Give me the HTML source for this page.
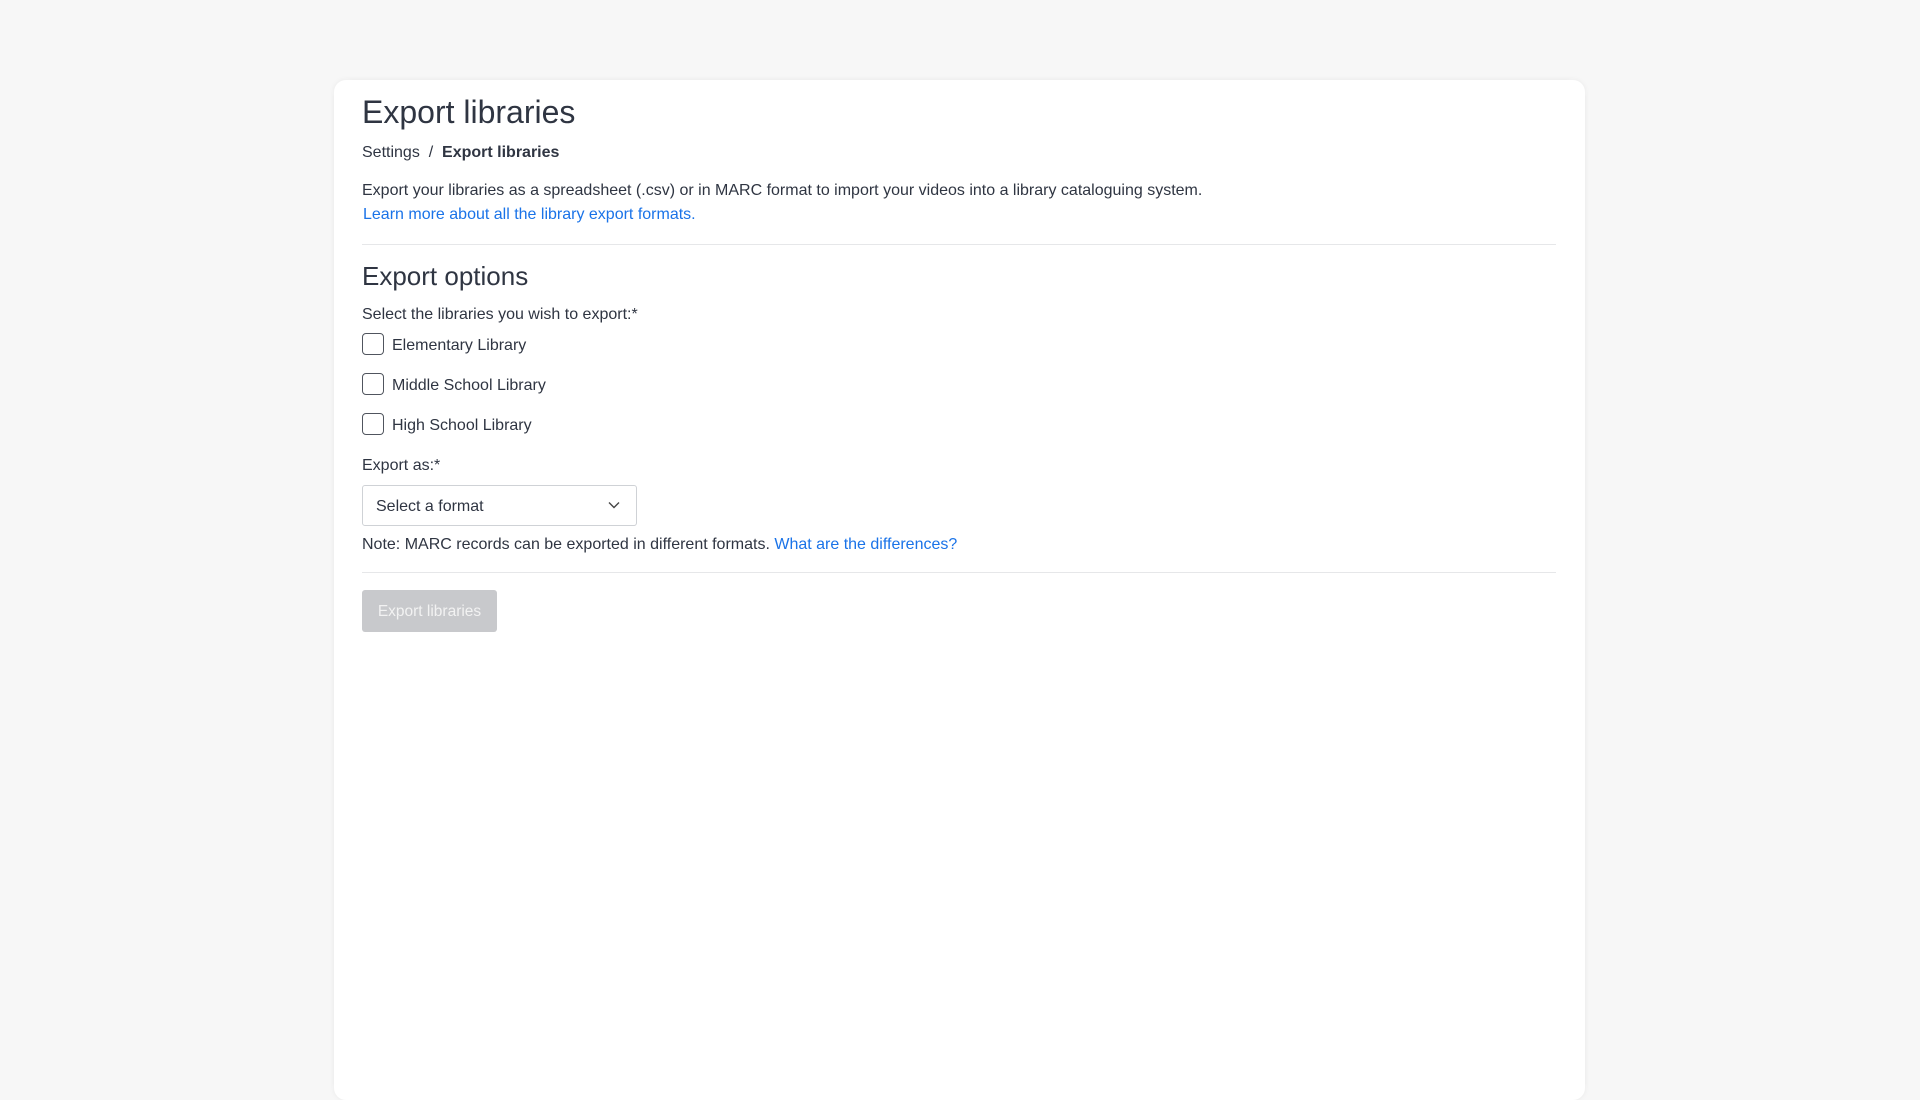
<!DOCTYPE html>
<html><head><meta charset="utf-8"><style>
*{box-sizing:border-box;margin:0;padding:0}
body{width:1920px;height:1080px;background:#f7f7f7;font-family:"Liberation Sans",sans-serif;color:#2f3542;overflow:hidden;position:relative}
.card{position:absolute;left:334px;top:80px;width:1251px;height:1020px;background:#fff;border-radius:12px;box-shadow:0 0 6px rgba(0,0,0,0.06)}
.a{position:absolute;left:28px;white-space:nowrap}
h1{font-weight:400;font-size:32px}
.t{font-size:16px}
.l{color:#1a73e8}
.hr{position:absolute;left:28px;width:1194px;height:1px;background:#e6e7e9}
.cb{position:absolute;left:28px;width:22px;height:22px;border:1.6px solid #50555e;border-radius:4px}
.sel{position:absolute;left:28px;top:405px;width:275px;height:41px;border:1px solid #cfd2d6;border-radius:3px}
.btn{position:absolute;left:28px;top:510px;width:135px;height:42px;background:#c8c9cc;border-radius:3px;color:#f2f2f2;font-size:15.5px;text-align:center;line-height:42px}
</style></head><body>
<div class="card">
<h1 class="a" style="top:14px">Export libraries</h1>
<div class="a t" style="top:64px">Settings &nbsp;/&nbsp; <b>Export libraries</b></div>
<div class="a t" style="top:102px">Export your libraries as a spreadsheet (.csv) or in MARC format to import your videos into a library cataloguing system.</div>
<div class="a t l" style="top:126px;left:29px">Learn more about all the library export formats.</div>
<div class="hr" style="top:164px"></div>
<div class="a" style="top:181px;font-size:26px">Export options</div>
<div class="a t" style="top:226px">Select the libraries you wish to export:*</div>
<div class="cb" style="top:253px"></div><div class="a t" style="left:58px;top:257px">Elementary Library</div>
<div class="cb" style="top:293px"></div><div class="a t" style="left:58px;top:297px">Middle School Library</div>
<div class="cb" style="top:333px"></div><div class="a t" style="left:58px;top:337px">High School Library</div>
<div class="a t" style="top:377px">Export as:*</div>
<div class="sel"><span class="t" style="position:absolute;left:13px;top:12px">Select a format</span>
<svg style="position:absolute;left:245px;top:15px" width="12" height="8" viewBox="0 0 12 8"><path d="M1 1.5L6 6.5L11 1.5" fill="none" stroke="#444" stroke-width="1.4"/></svg></div>
<div class="a t" style="top:456px">Note: MARC records can be exported in different formats. <span class="l">What are the differences?</span></div>
<div class="hr" style="top:492px"></div>
<div class="btn" style="line-height:44px">Export libraries</div>
</div>
</body></html>
